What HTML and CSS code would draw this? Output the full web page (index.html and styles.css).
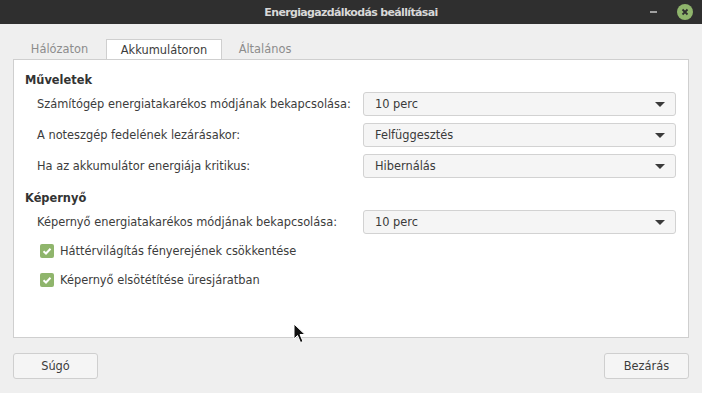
FILE: index.html
```html
<!DOCTYPE html>
<html lang="hu">
<head>
    <meta charset="UTF-8">
    <title>Energiagazdálkodás beállításai</title>
    <link rel="stylesheet" href="styles.css">
</head>
<body>
    <div class="window">
        <div class="titlebar">
            <span class="title">Energiagazdálkodás beállításai</span>
            <div class="controls">
                <span class="minimize"></span>
                <span class="close">
                    <svg width="16" height="16" viewBox="0 0 16 16">
                        <circle cx="8" cy="8" r="8" fill="#8fb56c"/>
                        <path d="M5.5 5.5 L10.5 10.5 M10.5 5.5 L5.5 10.5" stroke="#2f2f2f" stroke-width="1.8"/>
                    </svg>
                </span>
            </div>
        </div>

        <div class="body">
            <div class="tabs">
                <div class="tab">Hálózaton</div>
                <div class="tab active">Akkumulátoron</div>
                <div class="tab">Általános</div>
            </div>
            <div class="panel">
                <div class="section-title">Műveletek</div>
                <div class="row">
                    <span class="label">Számítógép energiatakarékos módjának bekapcsolása:</span>
                    <div class="combo"><span>10 perc</span><span class="arrow"></span></div>
                </div>
                <div class="row">
                    <span class="label">A noteszgép fedelének lezárásakor:</span>
                    <div class="combo"><span>Felfüggesztés</span><span class="arrow"></span></div>
                </div>
                <div class="row">
                    <span class="label">Ha az akkumulátor energiája kritikus:</span>
                    <div class="combo"><span>Hibernálás</span><span class="arrow"></span></div>
                </div>

                <div class="section-title second">Képernyő</div>
                <div class="row">
                    <span class="label">Képernyő energiatakarékos módjának bekapcsolása:</span>
                    <div class="combo"><span>10 perc</span><span class="arrow"></span></div>
                </div>
                <label class="check">
                    <span class="box"><svg width="14" height="14" viewBox="0 0 14 14"><path d="M3.5 7.2 L6 9.5 L10.5 4.8" fill="none" stroke="#fff" stroke-width="2"/></svg></span>
                    Háttérvilágítás fényerejének csökkentése
                </label>
                <label class="check">
                    <span class="box"><svg width="14" height="14" viewBox="0 0 14 14"><path d="M3.5 7.2 L6 9.5 L10.5 4.8" fill="none" stroke="#fff" stroke-width="2"/></svg></span>
                    Képernyő elsötétítése üresjáratban
                </label>
            </div>
            <div class="footer">
                <button>Súgó</button>
                <button>Bezárás</button>
            </div>
        </div>

        <svg class="cursor" width="14" height="22" viewBox="0 0 14 22">
            <path d="M1 1 L1 16 L4.5 12.5 L7.5 19.5 L10 18.5 L7 11.5 L12 11.5 Z" fill="#111" stroke="#fff" stroke-width="1"/>
        </svg>
    </div>
</body>
</html>
```

FILE: styles.css
```css
/* Window frame */
body {
    margin: 0;
    background-color: #efefef;
    font-family: 'DejaVu Sans', sans-serif;
    font-size: 11.4px;
    color: #3c3c3c;
}

.window {
    width: 702px;
    height: 393px;
    position: relative;
    overflow: hidden;
}

.titlebar {
    height: 24px;
    background-color: #2f2f2f;
    display: flex;
    align-items: center;
    justify-content: center;
    position: relative;
}

.title {
    font-weight: bold;
    font-size: 11px;
    letter-spacing: -0.65px;
    color: #d8d8d8;
}

.controls {
    position: absolute;
    right: 9px;
    top: 4px;
    display: flex;
    align-items: center;
    gap: 20px;
}

.minimize {
    width: 7px;
    height: 2px;
    background-color: #a0a0a0;
}

.close {
    display: flex;
}

/* Notebook */
.body {
    padding: 15px 13px 0 13px;
}

.tabs {
    display: flex;
    height: 20px;
}

.tab {
    color: #8c8c8c;
    line-height: 21px;
    text-align: center;
}

.tab:first-child {
    width: 93px;
}

.tab.active {
    background-color: #fff;
    border: 1px solid #cfcfcf;
    border-bottom: none;
    color: #3c3c3c;
    width: 114px;
    line-height: 20px;
}

.tab:last-child {
    width: 86px;
}

.panel {
    height: 279px;
    background-color: #fff;
    border: 1px solid #cfcfcf;
    padding: 11px 12px 0 11px;
    box-sizing: border-box;
}

.section-title {
    font-weight: bold;
    color: #333;
    height: 18px;
    line-height: 18px;
}

.section-title.second {
    margin-top: 11px;
    height: 19px;
}

.row {
    display: flex;
    align-items: center;
    justify-content: space-between;
    padding-left: 12px;
    margin-top: 7px;
}

.label {
    white-space: nowrap;
}

.section-title + .row {
    margin-top: 2px;
}

.section-title:first-child + .row {
    margin-top: 3px;
}

.combo {
    width: 313px;
    height: 24px;
    border: 1px solid #d2d2d2;
    border-radius: 3px;
    background-color: #f5f5f5;
    display: flex;
    align-items: center;
    justify-content: space-between;
    padding: 0 10px 0 11px;
    box-sizing: border-box;
    color: #3a3a3a;
}

.arrow {
    width: 0;
    height: 0;
    border-left: 5px solid transparent;
    border-right: 5px solid transparent;
    border-top: 5px solid #3a3a3a;
}

.check {
    display: flex;
    align-items: center;
    gap: 6px;
    padding-left: 15px;
    height: 18px;
    margin-top: 8px;
}

.check + .check {
    margin-top: 11px;
}

.box {
    width: 14px;
    height: 14px;
    border-radius: 2px;
    background-color: #8fb56c;
    display: flex;
}

/* Dialog buttons */
.footer {
    display: flex;
    justify-content: space-between;
    margin-top: 15px;
}

button {
    width: 85px;
    height: 26px;
    border: 1px solid #cfcfcf;
    border-radius: 3px;
    background-color: #f5f5f5;
    font-family: 'DejaVu Sans', sans-serif;
    font-size: 11.4px;
    color: #3c3c3c;
}

.cursor {
    position: absolute;
    left: 293px;
    top: 323px;
}
```
